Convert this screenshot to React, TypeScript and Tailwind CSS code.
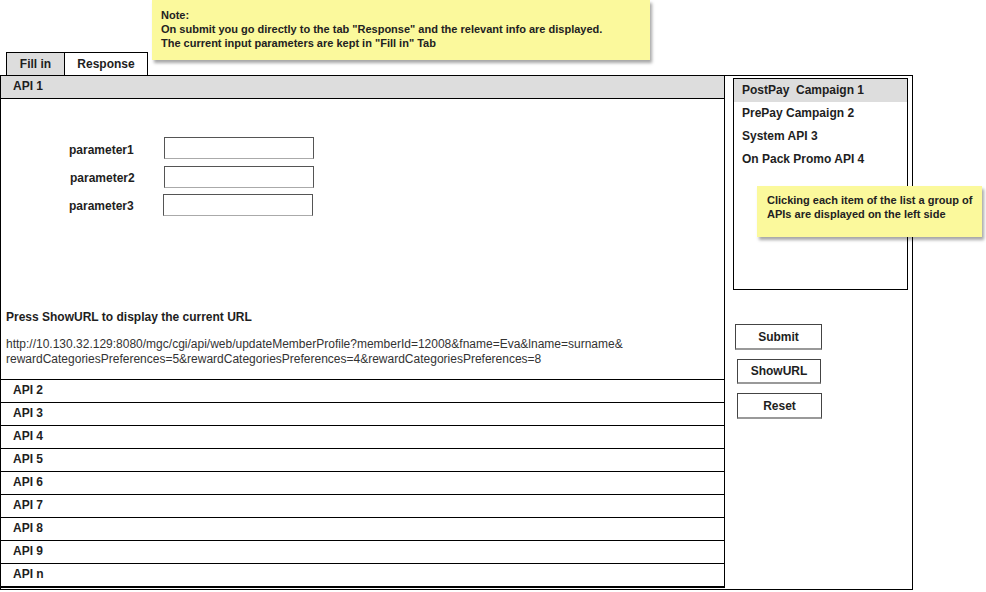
import React from "react";

const apis = ["API 2", "API 3", "API 4", "API 5", "API 6", "API 7", "API 8", "API 9", "API n"];
const campaigns = ["PostPay  Campaign 1", "PrePay Campaign 2", "System API 3", "On Pack Promo API 4"];

export default function App() {
  return (
    <div className="relative w-[986px] h-[592px] bg-white font-['Liberation_Sans',Arial,sans-serif] text-[#1e1e1e] overflow-hidden">
      <div className="h-[52px]" />
      {/* tabs */}
      <div className="flex ml-[6px] h-[23px] text-[12px] font-bold">
        <div className="w-[58px] border-t border-l border-black bg-[#dddddd] flex items-center justify-center pb-[1px]">Fill in</div>
        <div className="w-[84px] border-t border-l border-r border-black bg-white flex items-center justify-center pb-[1px]">Response</div>
      </div>
      {/* main box */}
      <div className="w-[913px] h-[515px] border border-black flex">
        <div className="w-[724px] border-r border-b border-black flex flex-col self-start">
          <div className="h-[23px] bg-[#dddddd] border-b border-black flex items-center pl-[12px] pb-[2px] text-[12px] font-bold">API 1</div>
          <div className="h-[281px] border-b border-black flex flex-col">
            <div className="pt-[38px] flex flex-col text-[12px] font-bold">
              <div className="flex items-center h-[22px]">
                <div className="w-[163px] pl-[68px] pt-[3px]">parameter1</div>
                <div className="w-[150px] h-[22px] border border-[#555] border-b-[#aaa] bg-white" />
              </div>
              <div className="flex items-center h-[22px] mt-[7px]">
                <div className="w-[163px] pl-[69px] pt-[1px]">parameter2</div>
                <div className="w-[150px] h-[22px] border border-[#555] border-b-[#aaa] bg-white" />
              </div>
              <div className="flex items-center h-[22px] mt-[6px]">
                <div className="w-[162px] pl-[68px] pt-[1px]">parameter3</div>
                <div className="w-[150px] h-[22px] border border-[#555] border-b-[#aaa] bg-white" />
              </div>
            </div>
            <div className="mt-[94px] pl-[5px] text-[12px] font-bold leading-[15px]">Press ShowURL to display the current URL</div>
            <div className="mt-[12px] pl-[5px] text-[12px] leading-[15px] text-[#333]">
              <div>http://10.130.32.129:8080/mgc/cgi/api/web/updateMemberProfile?memberId=12008&amp;fname=Eva&amp;lname=surname&amp;</div>
              <div>rewardCategoriesPreferences=5&amp;rewardCategoriesPreferences=4&amp;rewardCategoriesPreferences=8</div>
            </div>
          </div>
          {apis.map((a) => (
            <div key={a} className="h-[23px] border-b border-black flex items-center pl-[12px] pb-[2px] text-[12px] font-bold">
              {a}
            </div>
          ))}
        </div>
        <div className="ml-[8px] flex flex-col">
          <div className="mt-[2px] w-[175px] h-[212px] border border-black flex flex-col text-[12px] font-bold">
            {campaigns.map((c, i) => (
              <div key={c} className={`h-[23px] flex items-center pl-[8px] pb-[1px] whitespace-pre ${i === 0 ? "bg-[#dddddd]" : ""}`}>
                {c}
              </div>
            ))}
          </div>
          <div className="flex flex-col text-[12px] font-bold">
            <div className="mt-[34px] ml-[2px] w-[87px] h-[26px] border border-[#444] border-b-2 border-b-[#999] flex items-center justify-center">Submit</div>
            <div className="mt-[9px] ml-[4px] w-[84px] h-[25px] border border-[#444] border-b-2 border-b-[#999] flex items-center justify-center">ShowURL</div>
            <div className="mt-[9px] ml-[4px] w-[85px] h-[26px] border border-[#444] border-b-2 border-b-[#999] flex items-center justify-center">Reset</div>
          </div>
        </div>
      </div>
      {/* sticky notes */}
      <div className="absolute left-[152px] top-0 w-[498px] h-[60px] bg-[#fbf99c] shadow-[2px_3px_3px_rgba(0,0,0,0.35)] pl-[9px] pt-[8px] text-[11px] font-bold leading-[14px] text-[#222]">
        <div>Note:</div>
        <div>On submit you go directly to the tab "Response" and the relevant info are displayed.</div>
        <div>The current input parameters are kept in "Fill in" Tab</div>
      </div>
      <div className="absolute left-[757px] top-[186px] w-[225px] h-[51px] bg-[#fbf99c] shadow-[2px_3px_3px_rgba(0,0,0,0.35)] pl-[10px] pt-[7px] text-[11px] font-bold leading-[14px] text-[#222]">
        <div>Clicking each item of the list a group of</div>
        <div>APIs are displayed on the left side</div>
      </div>
    </div>
  );
}
